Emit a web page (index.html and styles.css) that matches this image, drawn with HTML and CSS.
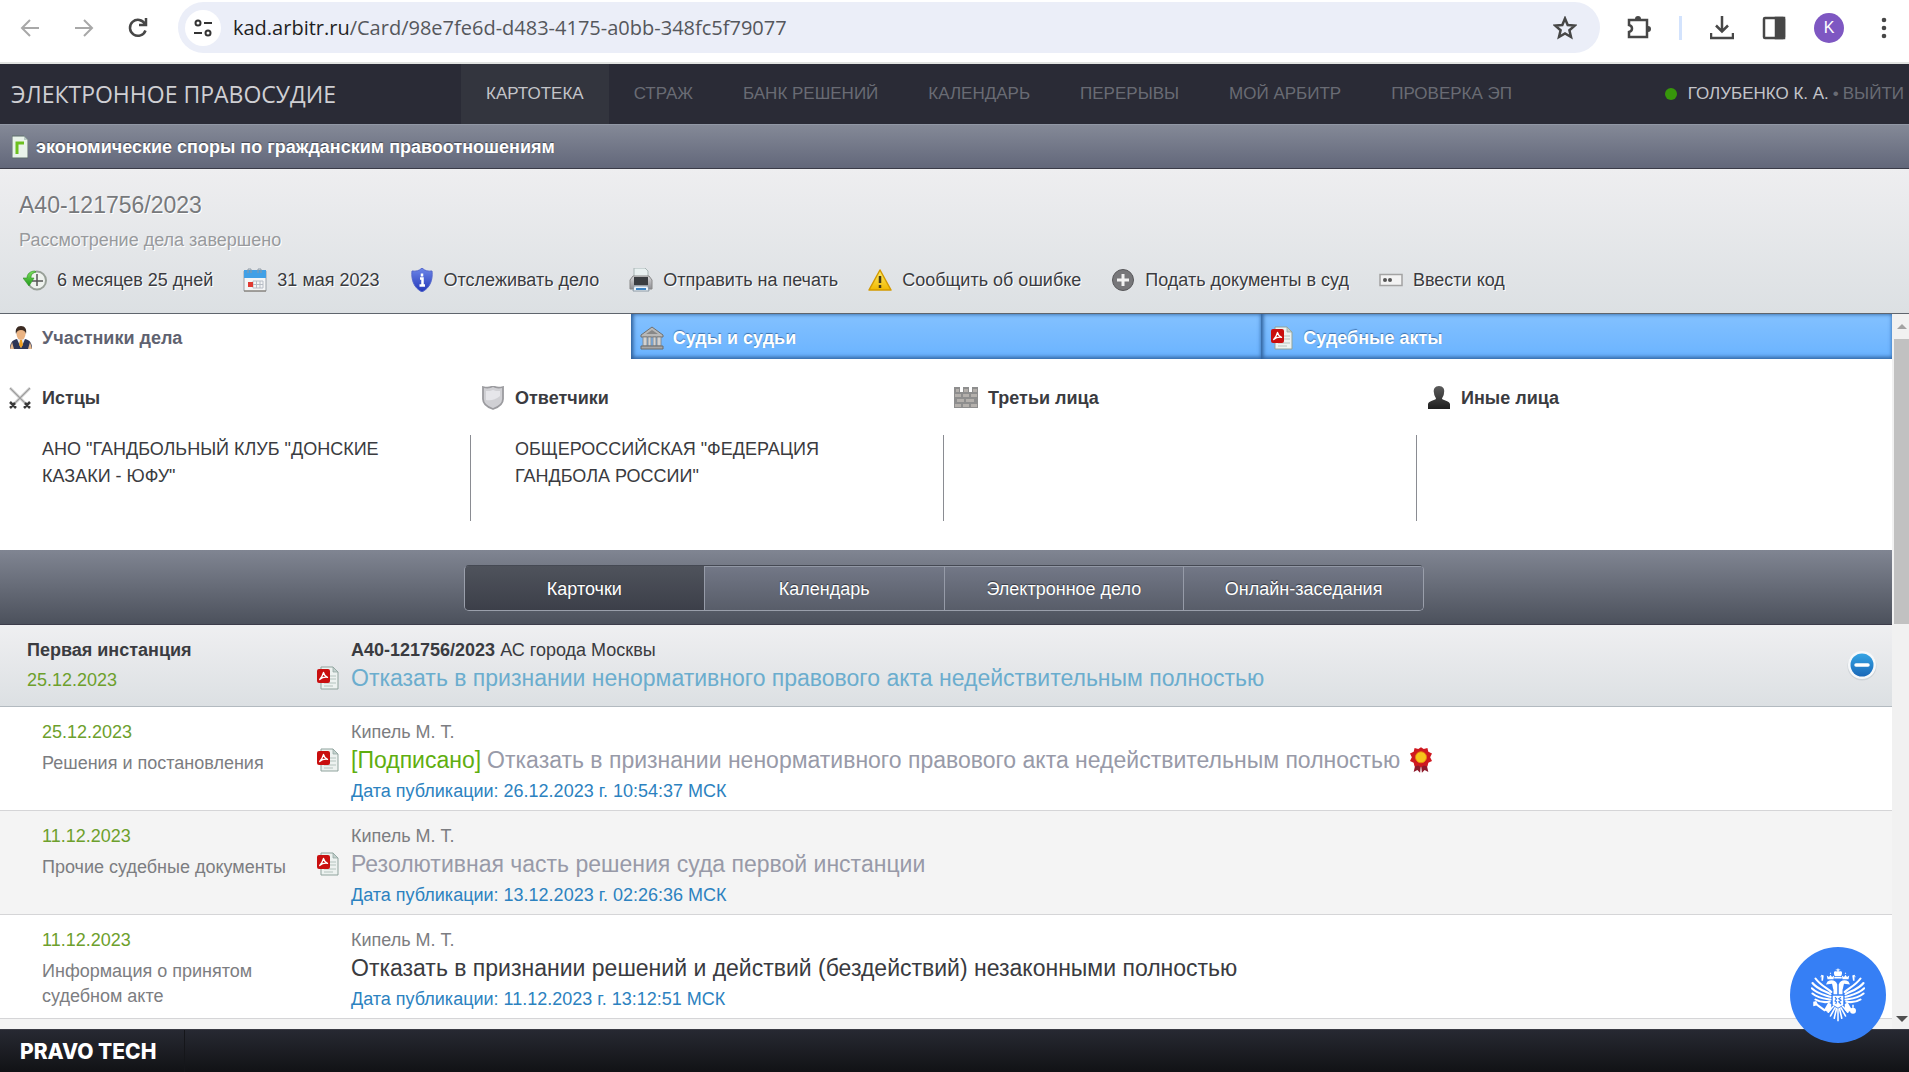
FILE: index.html
```html
<!DOCTYPE html>
<html lang="ru">
<head>
  <meta charset="UTF-8">
  <title>А40-121756/2023 - Электронное правосудие</title>
  <link rel="stylesheet" href="styles.css">
</head>
<body>
  <!-- общие иконки -->
  <svg class="defs" width="0" height="0" aria-hidden="true">
    <defs>
      <linearGradient id="gGreen" x1="0" y1="0" x2="0" y2="1"><stop offset="0" stop-color="#7ce05c"/><stop offset="1" stop-color="#219a1c"/></linearGradient>
      <linearGradient id="gBlue" x1="0" y1="0" x2="0" y2="1"><stop offset="0" stop-color="#6d86e8"/><stop offset="1" stop-color="#2337b8"/></linearGradient>
      <linearGradient id="gYellow" x1="0" y1="0" x2="0" y2="1"><stop offset="0" stop-color="#ffee6a"/><stop offset="1" stop-color="#f0b800"/></linearGradient>
      <linearGradient id="gGrey" x1="0" y1="0" x2="0" y2="1"><stop offset="0" stop-color="#d8d8da"/><stop offset="1" stop-color="#8e8e92"/></linearGradient>
      <linearGradient id="gDark" x1="0" y1="0" x2="0" y2="1"><stop offset="0" stop-color="#5c5c5c"/><stop offset="1" stop-color="#1f1f1f"/></linearGradient>
      <linearGradient id="gMinus" x1="0" y1="0" x2="0" y2="1"><stop offset="0" stop-color="#35a4e4"/><stop offset="1" stop-color="#1a68b8"/></linearGradient>
      <symbol id="pdf" viewBox="0 0 24 24">
        <path d="M5 1h12l5 5v17H5z" fill="#edf2f0" stroke="#8fa39d"/>
        <path d="M17 1l5 5h-5z" fill="#c4d2ce" stroke="#8fa39d" stroke-width=".7"/>
        <path d="M14 10h6M14 13h6M8 17h12M8 20h9" stroke="#b4c3be"/>
        <rect x="1" y="3" width="13" height="14" rx="2" fill="#c90f0f"/>
        <path d="M7.500 6.500c-.8 3-2 5-3.800 7 2.400-2 4.800-2.600 7.800-2.200-2.200-1-3.500-2.400-4-4.800z" fill="none" stroke="#fff" stroke-width="1.300" stroke-linejoin="round"/>
      </symbol>
      <symbol id="wing" viewBox="0 0 36 72" overflow="visible">
        <g fill="none" stroke="#fff" stroke-width="2.800" stroke-linecap="round">
          <path d="M27 32C23 27 13 24 6 14M26 35C20 31 9 29 2 20M26 38.500C19 36 9 35 1 27M26 42C19 41 10 41 2 34M25 45C19 46 12 46 6 42"/>
          <path d="M34 54c-1 5-2 8-3 13M32 53c-2 4-4 7-6 11M30 51c-3 3-5 5-7 8" stroke-width="2.200"/>
        </g>
        <path d="M35 35h-5V29c-1-2-1-5-2-8l-8 1 2-4c5-3 11-2 13 4z"/>
        <path d="M22 15l-1-5 3 2 2-3 2 3 3-2-1 5zM14 17v-6l-2 2 2-4 3 1-1 7zM26 8l-1-1 1-1 1 1z"/>
        <path d="M23 46l4 2v8l-4 3-6-3 2-3z"/>
      </symbol>
    </defs>
  </svg>

  <div class="browser">
    <button class="browser-btn muted" aria-label="Назад"><svg viewBox="0 0 24 24"><path d="M21 12H4M12 4l-8 8 8 8"/></svg></button>
    <button class="browser-btn muted" aria-label="Вперёд"><svg viewBox="0 0 24 24"><path d="M3 12h17M12 4l8 8-8 8"/></svg></button>
    <button class="browser-btn" aria-label="Обновить"><svg viewBox="0 0 24 24"><path d="M19.500 14.500a8 8 0 1 1-.5-6.500M20 2v7h-7"/></svg></button>
    <div class="address">
      <button class="site-info" aria-label="Сведения о сайте"><svg viewBox="0 0 24 24"><circle cx="7" cy="7" r="2.500"/><path d="M13 7h8M3 17h8"/><circle cx="17" cy="17" r="2.500"/></svg></button>
      <span class="url">kad.arbitr.ru<span class="url-path">/Card/98e7fe6d-d483-4175-a0bb-348fc5f79077</span></span>
      <button class="browser-btn star" aria-label="В закладки"><svg viewBox="0 0 24 24"><path d="M12 2.500l2.700 6.500 7 .6-5.300 4.600 1.600 6.800-6-3.600-6 3.600 1.600-6.800-5.300-4.600 7-.6z"/></svg></button>
    </div>
    <div class="browser-tools">
      <button class="browser-btn" aria-label="Расширения"><svg viewBox="0 0 24 24"><path d="M2 4h18v17H2v-5c4-1 4-6 0-7z"/><path d="M8 3a3 3 0 0 1 6 0zM21 10a3 3 0 0 1 0 6z" fill="#474747" stroke="none"/></svg></button>
      <span class="browser-sep"></span>
      <button class="browser-btn" aria-label="Загрузки"><svg viewBox="0 0 24 24"><path d="M12 0v15M6 9.500l6 6 6-6M1 17v5h22v-5"/></svg></button>
      <button class="browser-btn" aria-label="Боковая панель"><svg viewBox="0 0 24 24"><rect x="2" y="2" width="20" height="20" rx="1"/><path d="M14 2h8v20h-8z" fill="#474747"/></svg></button>
      <button class="avatar">K</button>
      <button class="browser-btn" aria-label="Меню"><svg viewBox="0 0 24 24"><g fill="#474747" stroke="none"><circle cx="12" cy="4" r="2.300"/><circle cx="12" cy="12" r="2.300"/><circle cx="12" cy="20" r="2.300"/></g></svg></button>
    </div>
  </div>

  <header class="header">
    <a class="logo" href="#">ЭЛЕКТРОННОЕ ПРАВОСУДИЕ</a>
    <nav class="menu">
      <a class="active" href="#">КАРТОТЕКА</a>
      <a href="#">СТРАЖ</a>
      <a href="#">БАНК РЕШЕНИЙ</a>
      <a href="#">КАЛЕНДАРЬ</a>
      <a href="#">ПЕРЕРЫВЫ</a>
      <a href="#">МОЙ АРБИТР</a>
      <a href="#">ПРОВЕРКА ЭП</a>
    </nav>
    <div class="user">
      <span class="online"></span>
      <a class="user-name" href="#">ГОЛУБЕНКО К. А.</a>
      <span>•</span>
      <a href="#">ВЫЙТИ</a>
    </div>
  </header>

  <div class="category">
    <svg class="category-icon" viewBox="0 0 16 24"><path d="M0 1h12l4 4v18H0z" fill="#e9f3ea" stroke="#5d6c6a"/><path d="M12 1l4 4h-4z" fill="#b9c9c4"/><path d="M5 19V8h7" fill="none" stroke="#6cc01f" stroke-width="3"/></svg>
    экономические споры по гражданским правоотношениям
  </div>

  <section class="case">
    <h1>А40-121756/2023</h1>
    <p class="case-state">Рассмотрение дела завершено</p>
    <ul class="case-tools">
      <li>
        <svg viewBox="0 0 24 24"><circle cx="14" cy="12.500" r="9" fill="#eef2ee" stroke="#98a098" stroke-width="2"/><path d="M14 6v7h6M14 13v5M14 13H9" fill="none" stroke="#555" stroke-width="1.500"/><path d="M12 3C7 3 4 6 4 10H0l6 8 5-8H8c0-3 1-5 5-6z" fill="url(#gGreen)" stroke="#2f8f26" stroke-width=".6"/></svg>
        <span>6 месяцев 25 дней</span>
      </li>
      <li>
        <svg viewBox="0 0 24 24"><path d="M1 3h22v20H1z" fill="#f4f5f6" stroke="#9aa0a8"/><path d="M1 2h22v8H1z" fill="#41a0e6"/><path d="M5 5V1h3v4M15 5V1h3v4" fill="none" stroke="#8d9aa6"/><path d="M10 13h10v7H10zM13.500 13v7M17 13v7M10 16.500h10" fill="none" stroke="#b7bdc6"/><path d="M5 14h5v5H5z" fill="#e03a33"/><path d="M1 23h22" stroke="#7d7468"/></svg>
        <span>31 мая 2023</span>
      </li>
      <li>
        <button><svg viewBox="0 0 24 24"><path d="M12 0c3 3 6 3.500 10 3 1 9-2 17-10 21C4 20 1 12 2 3c4 .5 7 0 10-3z" fill="url(#gBlue)" stroke="#5467cc"/><path d="M12 5.500v3M10 10.500h2.500v7M9.500 17.500h5.500" fill="none" stroke="#fff" stroke-width="2.500"/></svg>
        <span>Отслеживать дело</span></button>
      </li>
      <li>
        <button><svg viewBox="0 0 24 24"><path d="M5 0h11l3 3v7H5z" fill="#e9f1f1" stroke="#a8b5b5"/><path d="M1 12l3-4h16l3 4v9H1z" fill="url(#gGrey)" stroke="#888"/><path d="M5 9h14v8H5z" fill="#3b3e42"/><path d="M5 18h14l1 5H4z" fill="#eaf3fb" stroke="#8e9aa5"/><path d="M7 21h10" stroke="#3b83c4" stroke-width="2"/></svg>
        <span>Отправить на печать</span></button>
      </li>
      <li>
        <button><svg viewBox="0 0 24 24"><path d="M12 2l11 20H1z" fill="url(#gYellow)" stroke="#d39a00" stroke-width="1.500" stroke-linejoin="round"/><path d="M12 8v7M12 17v3" stroke="#443a1a" stroke-width="2.500"/></svg>
        <span>Сообщить об ошибке</span></button>
      </li>
      <li>
        <button><svg viewBox="0 0 24 24"><circle cx="12" cy="12" r="10.500" fill="#77777a" stroke="#58585b"/><path d="M12 6v12M6 12h12" stroke="#f2f2f2" stroke-width="3"/></svg>
        <span>Подать документы в суд</span></button>
      </li>
      <li>
        <button><svg viewBox="0 0 24 24"><path d="M1 6.500h22v11H1z" fill="#f3f3f3" stroke="#a3a3a3" stroke-width="1.500"/><circle cx="6" cy="12" r="2" fill="#555"/><circle cx="11" cy="12" r="2" fill="#555"/></svg>
        <span>Ввести код</span></button>
      </li>
    </ul>
  </section>

  <div class="page">
    <main class="content">
      <div class="tabs" role="tablist">
        <button class="tab active" role="tab">
          <svg viewBox="0 0 24 24"><path d="M1 23c0-6 2-9 7-10h8c5 1 7 4 7 10z" fill="#2d3656"/><path d="M8 13h8l-4 9z" fill="#e8ecf4"/><path d="M11 14h2l1 5-2 3-2-3z" fill="#f0a020"/><ellipse cx="12" cy="8" rx="4.500" ry="6" fill="#eab383"/><path d="M7 8c-1-5 1-8 5-8s6 3 5 8c-1-3-2-4-5-4s-4 1-5 4z" fill="#3c2b22"/><path d="M1 23l2-7 2 7z" fill="#e6b98d"/><path d="M23 23l-2-7-2 7z" fill="#e6b98d"/></svg>
          Участники дела
        </button>
        <button class="tab" role="tab">
          <svg viewBox="0 0 24 24"><path d="M12 1l11 8v2H1V9z" fill="#b8b8b8" stroke="#707070"/><path d="M12 4l6 4H6z" fill="#888"/><path d="M3 11h4v9H3zM8 11h3v9H8zM13 11h3v9h-3zM17 11h4v9h-4z" fill="#d2d2d2" stroke="#808080" stroke-width=".8"/><path d="M1 20h22v3H1z" fill="#a7a7a7" stroke="#6c6c6c"/></svg>
          Суды и судьи
        </button>
        <button class="tab" role="tab">
          <svg><use href="#pdf"/></svg>
          Судебные акты
        </button>
      </div>

      <div class="parties">
        <section class="party">
          <h2><svg viewBox="0 0 24 24"><path d="M2 2l17 17M22 2L5 19" stroke="#c2c2c2" stroke-width="2.500"/><path d="M2 2l17 17M22 2L5 19" stroke="#8d8d8d" stroke-width=".7"/><path d="M2 16l6 6M7 17l-5 5M22 16l-6 6M17 17l5 5" stroke="#3a3a3a" stroke-width="2.500"/></svg>Истцы</h2>
          <div class="party-list"><a href="#">АНО "ГАНДБОЛЬНЫЙ КЛУБ "ДОНСКИЕ КАЗАКИ - ЮФУ"</a></div>
        </section>
        <section class="party">
          <h2><svg viewBox="0 0 24 24"><path d="M2 1c4 1 7 1 10-1 3 2 6 2 10 1v12c0 5-4 8-10 10C6 21 2 18 2 13z" fill="#d0d0d4" stroke="#9b9b9f" stroke-width="1.800"/><path d="M5 5c3 0 5 0 7-1 2 1 4 1 7 1v5c-5 4-9 5-14 4z" fill="#e6e6ea"/></svg>Ответчики</h2>
          <div class="party-list"><a href="#">ОБЩЕРОССИЙСКАЯ "ФЕДЕРАЦИЯ ГАНДБОЛА РОССИИ"</a></div>
        </section>
        <section class="party">
          <h2><svg viewBox="0 0 24 24"><path d="M0 1h6v5h3V1h6v5h3V1h6v21H0z" fill="#8e8e8e"/><path d="M1 8h6v3H1zM9 8h6v3H9zM17 8h6v3h-6zM3 13h7v3H3zM12 13h8v3h-8zM1 18h6v3H1zM9 18h6v3H9zM17 18h6v3h-6zM2 3h3v3H2zM10 3h4v3h-4zM19 3h4v3h-4z" fill="#b4b0ac"/></svg>Третьи лица</h2>
          <div class="party-list"></div>
        </section>
        <section class="party">
          <h2><svg viewBox="0 0 24 24"><path d="M12 0c4 0 6 3 5 7 0 3-2 4-2 6 4 2 7 2 8 5v5H1v-5c1-3 4-3 8-5 0-2-2-3-2-6-1-4 1-7 5-7z" fill="url(#gDark)"/></svg>Иные лица</h2>
          <div class="party-list"></div>
        </section>
      </div>

      <div class="views">
        <div class="switch">
          <button class="active">Карточки</button>
          <button>Календарь</button>
          <button>Электронное дело</button>
          <button>Онлайн-заседания</button>
        </div>
      </div>

      <div class="row instance">
        <div class="row-left">
          <b>Первая инстанция</b>
          <span class="date">25.12.2023</span>
        </div>
        <svg class="row-pdf"><use href="#pdf"/></svg>
        <div class="row-right">
          <span class="court"><b>А40-121756/2023</b> АС города Москвы</span>
          <a class="title" href="#">Отказать в признании ненормативного правового акта недействительным полностью</a>
        </div>
        <button class="collapse" aria-label="Свернуть"><svg viewBox="0 0 32 32"><circle cx="16" cy="17" r="14.500" fill="#cfd4d8"/><circle cx="16" cy="16" r="14" fill="#f6f8fa"/><circle cx="16" cy="16" r="11.500" fill="url(#gMinus)"/><path d="M10 16h12" stroke="#fff" stroke-width="3.500" stroke-linecap="round"/></svg></button>
      </div>

      <div class="row">
        <div class="row-left">
          <span class="date">25.12.2023</span>
          <span class="type">Решения и постановления</span>
        </div>
        <svg class="row-pdf"><use href="#pdf"/></svg>
        <div class="row-right">
          <span>Кипель М. Т.</span>
          <a class="title" href="#"><span class="signed">[Подписано]</span> Отказать в признании ненормативного правового акта недействительным полностью
            <svg class="seal" viewBox="0 0 24 28"><path d="M7 14L4 27l4-2 3 3 1-9 1 9 3-3 4 2-3-13z" fill="#8e1a2c"/><path d="M12 0l3 2 4-1 1 4 4 2-2 4 2 4-4 2-1 4-4-1-3 2-3-2-4 1-1-4-4-2 2-4-2-4 4-2 1-4 4 1z" fill="#cf1920"/><circle cx="12" cy="11" r="6" fill="#f6c51c" stroke="#e8860c"/></svg></a>
          <span class="published">Дата публикации: 26.12.2023 г. 10:54:37 МСК</span>
        </div>
      </div>

      <div class="row">
        <div class="row-left">
          <span class="date">11.12.2023</span>
          <span class="type">Прочие судебные документы</span>
        </div>
        <svg class="row-pdf"><use href="#pdf"/></svg>
        <div class="row-right">
          <span>Кипель М. Т.</span>
          <a class="title" href="#">Резолютивная часть решения суда первой инстанции</a>
          <span class="published">Дата публикации: 13.12.2023 г. 02:26:36 МСК</span>
        </div>
      </div>

      <div class="row">
        <div class="row-left">
          <span class="date">11.12.2023</span>
          <span class="type">Информация о принятом судебном акте</span>
        </div>
        <div class="row-right">
          <span>Кипель М. Т.</span>
          <span class="title plain">Отказать в признании решений и действий (бездействий) незаконными полностью</span>
          <span class="published">Дата публикации: 11.12.2023 г. 13:12:51 МСК</span>
        </div>
      </div>
    </main>

    <div class="scrollbar">
      <span class="arrow-up"></span>
      <span class="thumb"></span>
      <span class="arrow-down"></span>
    </div>
  </div>

  <footer class="footer">
    <a href="#">PRAVO TECH</a>
  </footer>

  <button class="gerb" aria-label="Госуслуги">
    <svg viewBox="0 0 72 72" fill="#fff">
      <use href="#wing" width="36" height="72"/>
      <use href="#wing" width="36" height="72" transform="translate(72 0) scale(-1 1)"/>
      <path d="M36 0l1 2h2v1h-2v2c4-2 6 1 3 6h-8c-3-5-1-8 3-6V3h-2V2h2zM31 12h10v2H31zM35 54h2v17h-2z"/>
      <path d="M29 37h14v12l-7 4-7-4z"/>
      <path d="M3 45l4-1 2 4 11 8-2 2-11-8-4 1z"/>
      <circle cx="56" cy="57" r="4"/><path d="M55 49h2v4h-2z"/>
      <path d="M32 39l2 2-2 3 2 1-1 3M40 39l-3 2 3 2-3 2 3 3" fill="none" stroke="#367ff5" stroke-width="1.500"/>
    </svg>
  </button>
</body>
</html>
```
FILE: styles.css
```css
* { box-sizing: border-box; }
body {
  margin: 0;
  min-height: 100vh;
  display: flex;
  flex-direction: column;
  background: #fff;
  color: #3a3b40;
  font: 18px/26px "Liberation Sans", Arial, sans-serif;
}
a { color: inherit; text-decoration: none; }
button { margin: 0; padding: 0; border: none; background: none; color: inherit; font: inherit; cursor: pointer; }
h1, h2, p, ul { margin: 0; padding: 0; }
svg { display: block; flex: none; width: 24px; height: 24px; }
.defs { position: absolute; width: 0; height: 0; }

/* Панель браузера */
.browser {
  display: flex;
  align-items: center;
  height: 64px;
  padding: 2px 13px 9px 18px;
  border-bottom: 2px solid #e1e3e1;
}
.browser-btn { width: 24px; height: 24px; margin-right: 30px; }
.browser-btn svg { fill: none; stroke: #474747; stroke-width: 2.5; }
.browser-btn.muted svg { stroke: #a8a8a8; stroke-width: 2; }
.address {
  flex: 1;
  display: flex;
  align-items: center;
  height: 51px;
  margin-left: -2px;
  padding: 0 23px 0 7px;
  border-radius: 26px;
  background: #ebeef8;
}
.site-info {
  width: 36px;
  height: 36px;
  padding: 6px;
  border-radius: 50%;
  background: #fff;
}
.site-info svg { fill: none; stroke: #333; stroke-width: 2; }
.url { flex: 1; margin-left: 12px; font: 20px/26px "Open Sans", sans-serif; color: #1f1f1f; }
.url-path { color: #55575c; }
.star { margin: 0; }
.browser-tools { display: flex; align-items: center; gap: 28px; margin-left: 27px; }
.browser-tools .browser-btn { margin: 0; }
.browser-sep { width: 3px; height: 24px; background: #d3e3fd; }
.avatar { width: 30px; height: 30px; border-radius: 50%; background: #7e57c2; color: #fff; font-size: 16px; }

/* Шапка */
.header {
  display: flex;
  align-items: center;
  height: 60px;
  background: #2a2b36;
  color: #696b74;
  font-size: 17px;
}
.logo { width: 461px; padding-left: 11px; color: #cfcfd3; font: 23px/30px "Open Sans", sans-serif; }
.menu { display: flex; flex: 1; }
.menu a { padding: 0 25px; line-height: 60px; }
.menu .active { background: #33353e; color: #c3c4c9; }
.user { display: flex; align-items: center; gap: 4px; padding-right: 5px; }
.online { width: 12px; height: 12px; margin-right: 7px; border-radius: 50%; background: #37960b; }
.user-name { color: #c3c4c9; }

.category {
  display: flex;
  align-items: center;
  height: 45px;
  padding-left: 12px;
  gap: 8px;
  border-top: 1px solid #9298a5;
  border-bottom: 1px solid #3a3b48;
  background: linear-gradient(#848997, #62677a);
  color: #fff;
  font-weight: bold;
  text-shadow: 0 -1px 1px #3d414d;
}
.category-icon { width: 16px; }

/* Карточка дела */
.case {
  height: 145px;
  padding: 21px 19px 0;
  border-bottom: 1px solid #5f656d;
  background: linear-gradient(#eeeef0, #dce0e3);
  text-shadow: 1px 1px 0 #fff;
}
.case h1 { font-size: 23px; line-height: 30px; font-weight: normal; color: #77797c; }
.case-state { margin-top: 7px; color: #989a9d; }
.case-tools { display: flex; gap: 30px; margin-top: 14px; padding-left: 4px; list-style: none; }
.case-tools li, .case-tools button { display: flex; align-items: center; gap: 10px; text-shadow: inherit; }

.page { flex: 1; display: flex; }
.content { flex: 1; display: flex; flex-direction: column; background: #f4f4f4; }

.tabs { display: grid; grid-template-columns: repeat(3, 1fr); }
.tab {
  display: flex;
  align-items: center;
  gap: 9px;
  height: 45px;
  padding: 2px 0 0 9px;
  background: linear-gradient(#83c1ff, #6ab3ff);
  box-shadow: inset 2px 0 4px #2f5f99, inset 0 -2px 4px #3f78bb;
  color: #fff;
  font-weight: bold;
  text-shadow: 0 -1px 1px #3c71ad;
}
.tab.active { background: #fff; box-shadow: none; color: #5f6270; text-shadow: none; }

.parties { display: grid; grid-template-columns: repeat(4, 1fr); height: 191px; padding-top: 26px; background: #fff; }
.party h2 { display: flex; align-items: center; gap: 10px; padding-left: 8px; font-size: 18px; line-height: 26px; }
.party-list { height: 86px; margin: 24px 2px 0 0; padding: 1px 80px 0 42px; border-right: 1px solid #8a8c92; line-height: 27px; }
.party:last-child .party-list { border: none; }

.views {
  display: flex;
  justify-content: center;
  height: 75px;
  padding: 15px 18px 13px 14px;
  border-bottom: 1px solid #3c3c4a;
  background: linear-gradient(#808592, #4c515c);
}
.switch {
  display: flex;
  width: 960px;
  height: 46px;
  border: 1px solid #9a9fab;
  border-top-color: #454953;
  border-radius: 5px;
  overflow: hidden;
}
.switch button {
  flex: 1;
  padding-top: 2px;
  border-left: 1px solid #969ba8;
  background: linear-gradient(#737887, #585d69);
  box-shadow: inset 0 1px 0 #9298a5;
  color: #fff;
  text-shadow: 0 -1px 1px #33363e;
}
.switch .active { border: none; background: linear-gradient(#4f535c, #3c3f49); box-shadow: none; }

/* Список событий */
.row {
  display: grid;
  grid-template-columns: 316px 35px 1fr 30px;
  height: 104px;
  padding-top: 12px;
  border-bottom: 1px solid #d5d5d7;
  background: #fff;
  color: #7c7d81;
}
.row:nth-child(even) { background: #f4f4f4; }
.row-left { grid-column: 1; display: flex; flex-direction: column; padding: 0 20px 0 42px; }
.row-pdf { grid-column: 2; margin-top: 29px; }
.row-right { grid-column: 3; display: flex; flex-direction: column; }
.date { color: #6da02c; }
.type { margin-top: 6px; line-height: 25px; }
.title { display: flex; align-items: center; gap: 6px; font-size: 23px; line-height: 30px; color: #989aa8; }
.title.plain { color: #3a3b40; }
.signed { color: #5fae10; }
.seal { width: 22px; height: 26px; margin-left: 4px; }
.published { margin-top: 3px; color: #2c82c0; }
.row.instance {
  grid-template-columns: 316px 35px 1fr 46px;
  height: 82px;
  border-bottom-color: #b3bac0;
  background: linear-gradient(#efeff1, #dce0e3);
  color: #3a3b40;
}
.instance .row-left { padding-left: 27px; gap: 4px; }
.instance .title { color: #6badce; }
.collapse { grid-column: 4; width: 32px; height: 32px; margin-top: 12px; }
.collapse svg { width: 32px; height: 32px; }

.scrollbar { display: flex; flex-direction: column; width: 17px; padding-left: 2px; background: #f1f1f1; }
.scrollbar span { align-self: center; }
.arrow-up { margin: 10px 0; border: 5px solid transparent; border-top: none; border-bottom-color: #a3a3a3; }
.scrollbar .thumb { align-self: stretch; height: 285px; background: #c1c1c1; }
.arrow-down { margin: auto 0 7px; border: 6px solid transparent; border-bottom: none; border-top-color: #505050; }

.footer {
  height: 43px;
  border-top: 1px solid #3a3b44;
  background: linear-gradient(#272932, #111215);
  color: #fff;
  font: 800 21px/43px Inter, sans-serif;
}
.footer a { display: inline-block; width: 185px; padding-left: 20px; border-right: 1px solid #15161a; }

/* Плавающая кнопка */
.gerb {
  position: fixed;
  right: 23px;
  bottom: 29px;
  display: flex;
  align-items: center;
  justify-content: center;
  width: 96px;
  height: 96px;
  border-radius: 50%;
  background: #367ff5;
}
.gerb svg { width: 54px; height: 54px; }
```
